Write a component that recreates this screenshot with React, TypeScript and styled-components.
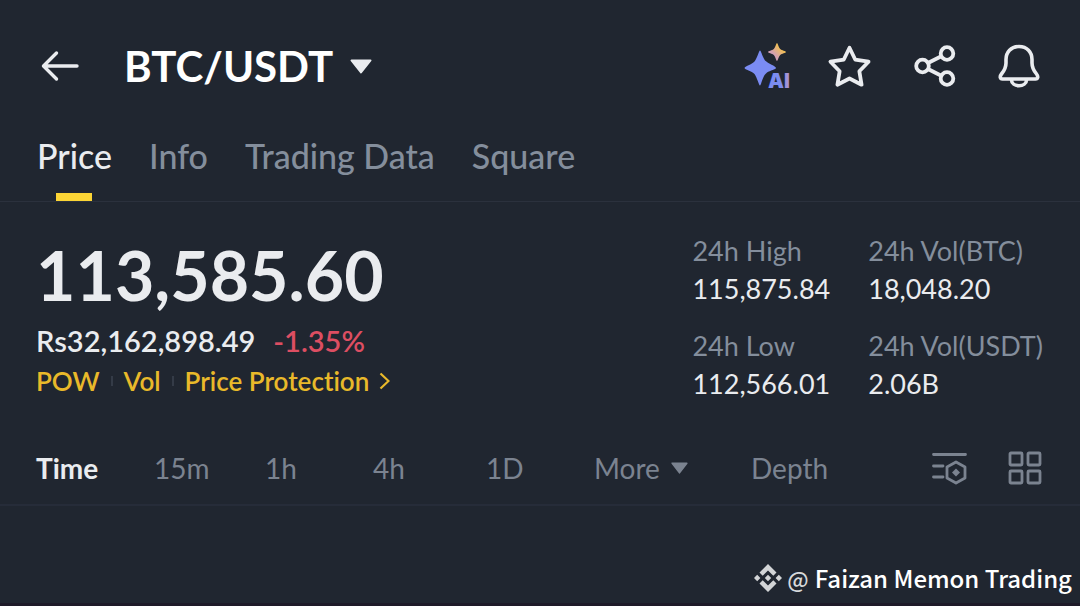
import React from "react";
import styled, { createGlobalStyle } from "styled-components";

const colors = {
  bg: "#202630",
  text: "#eaecef",
  muted: "#848e9c",
  dim: "#7b8390",
  line: "#2b313d",
  accent: "#fcd535",
  link: "#e9b92a",
  down: "#dd4e62",
};

const GlobalStyle = createGlobalStyle`
  *, *::before, *::after { box-sizing: border-box; }
  body {
    margin: 0;
    background: ${colors.bg};
    color: ${colors.text};
    font-family: Lato, "Open Sans", sans-serif;
    font-variant-ligatures: none;
  }
`;

const Page = styled.div`
  display: flex;
  flex-direction: column;
  min-height: 100vh;
  border-bottom: 3px solid #1e1a28;
`;

const PlainButton = styled.button`
  display: inline-flex;
  align-items: center;
  padding: 0;
  border: 0;
  background: none;
  color: inherit;
  font: inherit;
  cursor: pointer;
`;

const Header = styled.header`
  display: flex;
  align-items: center;
  justify-content: space-between;
  padding: 40px 40px 0;
`;

const HeaderGroup = styled.div<{ $gap: number }>`
  display: flex;
  align-items: center;
  gap: ${(p) => p.$gap}px;
`;

const PairButton = styled(PlainButton)`
  gap: 17px;
  color: #fff;
  font-size: 42px;
  font-weight: 700;
  line-height: 52px;
`;

const PairName = styled.h1`
  margin: 0;
  font: inherit;
`;

const Tabs = styled.nav`
  display: flex;
  gap: 37px;
  padding: 40px 37px 0;
  border-bottom: 1px solid ${colors.line};
`;

const Tab = styled.a<{ $active?: boolean }>`
  display: flex;
  flex-direction: column;
  align-items: center;
  gap: 13px;
  color: ${(p) => (p.$active ? colors.text : colors.muted)};
  font-size: 34px;
  font-weight: 500;
  line-height: 48px;
  text-decoration: none;

  &::after {
    content: "";
    width: 36px;
    height: 8px;
    background: ${(p) => (p.$active ? colors.accent : "transparent")};
  }
`;

const Summary = styled.section`
  display: flex;
  justify-content: space-between;
  padding: 30px 37px 0 36px;
`;

const Price = styled.div`
  font-size: 68px;
  font-weight: 700;
  line-height: 86px;
`;

const FiatRow = styled.div`
  display: flex;
  gap: 18px;
  margin-top: 3px;
  font-size: 29px;
  font-weight: 600;
  line-height: 40px;
`;

const Change = styled.span`
  color: ${colors.down};
`;

const TagRow = styled.div`
  display: flex;
  align-items: center;
  color: ${colors.link};
  font-size: 26px;
  font-weight: 600;
  line-height: 40px;
`;

const Tag = styled.a`
  display: inline-flex;
  align-items: center;
  gap: 10px;
  color: inherit;
  text-decoration: none;

  & + &::before {
    content: "";
    width: 2px;
    height: 10px;
    margin: 0 1px 0 11px;
    background: #343b47;
  }
`;

const Stats = styled.dl`
  display: grid;
  grid-template-columns: auto auto;
  column-gap: 38px;
  row-gap: 19px;
  align-content: start;
  margin: 0;
`;

const Stat = styled.div`
  font-size: 27px;
  line-height: 38px;
`;

const StatLabel = styled.dt`
  color: ${colors.muted};
`;

const StatValue = styled.dd`
  margin: 0;
`;

const ChartBar = styled.div`
  display: grid;
  grid-template-columns: 118fr 111fr 108fr 113fr 108fr 157fr 181fr 76fr 34px;
  align-items: center;
  justify-items: start;
  margin-top: 29px;
  padding: 16px 38px 16px 36px;
  border-bottom: 2px solid #262c39;
`;

const Interval = styled(PlainButton)<{ $active?: boolean }>`
  gap: 11px;
  color: ${(p) => (p.$active ? colors.text : colors.dim)};
  font-size: 28px;
  font-weight: ${(p) => (p.$active ? 700 : 400)};
  line-height: 40px;
`;

const Footer = styled.footer`
  display: flex;
  align-items: center;
  justify-content: flex-end;
  margin-top: auto;
  padding: 0 8px 6px;
  color: #fff;
  font-family: "Noto Sans CJK SC", "Noto Sans", sans-serif;
  font-size: 24px;
  font-weight: 500;
  line-height: 38px;
`;

const At = styled.span`
  margin: 0 6px 0 5px;
  color: #d6d8da;
  font-size: 22px;
`;

const BackIcon = () => (
  <svg width="40" height="32" viewBox="0 0 40 32" fill="none" stroke="#eaecef" strokeWidth="3.4" strokeLinecap="round" strokeLinejoin="round">
    <path d="M37 16H4M16.5 3L3.5 16L16.5 29" />
  </svg>
);

const Caret = ({ width, height, color }: { width: number; height: number; color: string }) => (
  <svg width={width} height={height} viewBox="0 0 22 15" preserveAspectRatio="none">
    <path d="M1.500 1.500H20.500L11 13.500Z" fill={color} stroke={color} strokeWidth="2" strokeLinejoin="round" />
  </svg>
);

const AiSvg = styled.svg`
  overflow: visible;
`;

const AiIcon = () => (
  <AiSvg width="41" height="48" viewBox="0 0 41 48">
    <defs>
      <linearGradient id="spark" x1="1" y1="0" x2="0" y2="1">
        <stop offset="0.3" stopColor="#efbd58" />
        <stop offset="0.65" stopColor="#d3a0b4" />
      </linearGradient>
      <linearGradient id="label" x1="0" y1="0" x2="1" y2="0">
        <stop offset="0.6" stopColor="#7b8cf0" />
        <stop offset="1" stopColor="#b496cc" />
      </linearGradient>
    </defs>
    <path d="M16 8.500C17 8.500 18.500 15 21 18.500C24 21.500 32 24 32 26C32 27.500 26 28.500 23 30.500L21 32.500C18.500 35.500 17 43.500 16 43.500C15 43.500 13 35.500 10.500 32C8 29 0.500 27.500 0.500 26C0.500 24.500 8 22.500 10.500 19.500C13 16.500 15 8.500 16 8.500Z" fill="#7b8cf3" />
    <path d="M33 1C33.700 1 34.700 5.500 36.200 7C37.700 8.500 42 9 42 10C42 11 37.700 11.500 36.200 13C34.700 14.500 33.700 19 33 19C32.300 19 31.300 14.500 29.800 13C28.300 11.500 24 11 24 10C24 9 28.300 8.500 29.800 7C31.300 5.500 32.300 1 33 1Z" fill="url(#spark)" />
    <text x="24" y="46" fill="url(#label)" stroke="#202630" strokeWidth="3" paintOrder="stroke" fontFamily="Inter, sans-serif" fontSize="20" fontWeight="900">AI</text>
  </AiSvg>
);

const StarIcon = () => (
  <svg width="45" height="45" viewBox="0 0 42 42" fill="none" stroke="#eaecef" strokeWidth="3.5" strokeLinejoin="round">
    <path d="M21 3.500L26.300 14.500L38.800 16.500L30.200 25.500L32.300 38L21 32.200L9.700 38L11.800 25.500L3.200 16.500L15.700 14.500Z" />
  </svg>
);

const ShareIcon = () => (
  <svg width="42" height="42" viewBox="0 0 42 42" fill="none" stroke="#eaecef" strokeWidth="3.800">
    <circle cx="8.500" cy="21" r="6.300" />
    <circle cx="33" cy="8.500" r="6.300" />
    <circle cx="33" cy="33.500" r="6.300" />
    <path d="M14 18L27.300 11.200M14 24L27.300 30.800" />
  </svg>
);

const BellIcon = () => (
  <svg width="42" height="44" viewBox="0 0 42 44" fill="none" stroke="#eaecef" strokeWidth="3.600" strokeLinejoin="round">
    <path d="M21 2.500C13 2.500 8 8 8 15.500V19C8 24 6 27 3.500 30C1.500 32.500 2 35 4.500 35H37.500C40 35 40.500 32.500 38.500 30C36 27 34 24 34 19V15.500C34 8 29 2.500 21 2.500Z" />
    <path d="M13.500 36C13.500 39.500 17 41.700 21 41.700C25 41.700 28.500 39.500 28.500 36" />
  </svg>
);

const ChevronIcon = () => (
  <svg width="11" height="18" viewBox="0 0 11 18" fill="none" stroke="#e9b92a" strokeWidth="2.200">
    <path d="M1.500 1.500L9.500 9L1.500 16.500" />
  </svg>
);

const IndicatorIcon = () => (
  <svg width="36" height="34" viewBox="0 0 36 34" fill="none" stroke="#7b8390" strokeWidth="2.800">
    <path d="M1.500 3.500H33.500M1.500 15H11M1.500 26H11" strokeLinecap="round" />
    <path d="M24 11L33 16V27L24 32L15 27V16Z" strokeLinejoin="round" />
    <path d="M24 17.500L28 21.500L24 25.500L20 21.500Z" fill="#7b8390" stroke="none" />
  </svg>
);

const GridIcon = () => (
  <svg width="34" height="34" viewBox="0 0 34 34" fill="none" stroke="#7b8390" strokeWidth="2.800">
    <rect x="2" y="2" width="12" height="12" rx="1" />
    <rect x="20" y="2" width="12" height="12" rx="1" />
    <rect x="2" y="20" width="12" height="12" rx="1" />
    <rect x="20" y="20" width="12" height="12" rx="1" />
  </svg>
);

const BinanceIcon = () => (
  <svg width="28" height="28" viewBox="0 0 28 28" fill="#d2d4d6">
    <path d="M14 0L22.500 8.500L19.300 11.700L14 6.400L8.700 11.700L5.500 8.500Z" />
    <path d="M14 28L22.500 19.500L19.300 16.300L14 21.600L8.700 16.300L5.500 19.500Z" />
    <path d="M3.200 10.800L6.400 14L3.200 17.200L0 14ZM24.800 10.800L28 14L24.800 17.200L21.600 14ZM14 10.800L17.200 14L14 17.200L10.800 14Z" />
  </svg>
);

const tabs = ["Price", "Info", "Trading Data", "Square"];
const stats = [
  ["24h High", "115,875.84"],
  ["24h Vol(BTC)", "18,048.20"],
  ["24h Low", "112,566.01"],
  ["24h Vol(USDT)", "2.06B"],
];
const intervals = ["Time", "15m", "1h", "4h", "1D"];

export default function App() {
  return (
    <Page>
      <GlobalStyle />
      <Header>
        <HeaderGroup $gap={44}>
          <PlainButton aria-label="Back"><BackIcon /></PlainButton>
          <PairButton>
            <PairName>BTC/USDT</PairName>
            <Caret width={22} height={15} color={colors.text} />
          </PairButton>
        </HeaderGroup>
        <HeaderGroup $gap={42}>
          <PlainButton aria-label="AI assistant"><AiIcon /></PlainButton>
          <PlainButton aria-label="Favorite"><StarIcon /></PlainButton>
          <PlainButton aria-label="Share"><ShareIcon /></PlainButton>
          <PlainButton aria-label="Alerts"><BellIcon /></PlainButton>
        </HeaderGroup>
      </Header>

      <Tabs>
        {tabs.map((name, i) => (
          <Tab key={name} href="#" $active={i === 0}>{name}</Tab>
        ))}
      </Tabs>

      <Summary>
        <div>
          <Price>113,585.60</Price>
          <FiatRow>
            <span>Rs32,162,898.49</span>
            <Change>-1.35%</Change>
          </FiatRow>
          <TagRow>
            <Tag href="#">POW</Tag>
            <Tag href="#">Vol</Tag>
            <Tag href="#">Price Protection<ChevronIcon /></Tag>
          </TagRow>
        </div>
        <Stats>
          {stats.map(([label, value]) => (
            <Stat key={label}>
              <StatLabel>{label}</StatLabel>
              <StatValue>{value}</StatValue>
            </Stat>
          ))}
        </Stats>
      </Summary>

      <ChartBar>
        {intervals.map((name, i) => (
          <Interval key={name} $active={i === 0}>{name}</Interval>
        ))}
        <Interval>More<Caret width={17} height={12} color={colors.dim} /></Interval>
        <Interval>Depth</Interval>
        <PlainButton aria-label="Indicators"><IndicatorIcon /></PlainButton>
        <PlainButton aria-label="Layout"><GridIcon /></PlainButton>
      </ChartBar>

      <Footer>
        <BinanceIcon />
        <At>@</At>
        <span>Faizan Memon Trading</span>
      </Footer>
    </Page>
  );
}
